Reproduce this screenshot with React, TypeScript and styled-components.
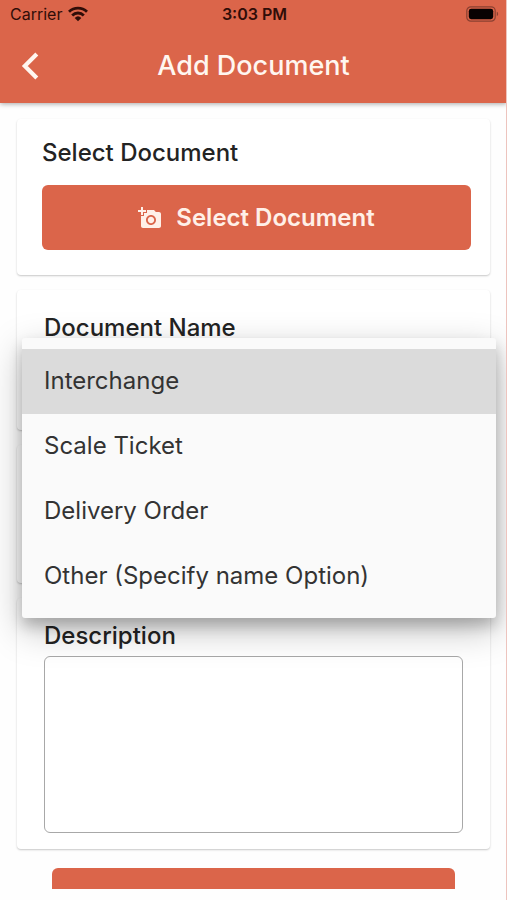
import React, { useState } from "react";
import styled, { createGlobalStyle } from "styled-components";
import { MdAddAPhoto } from "react-icons/md";

const accent = "#db654a";

const GlobalStyle = createGlobalStyle`
  *, *::before, *::after { box-sizing: border-box; }
  body {
    margin: 0;
    background: #fefefe;
    color: #232323;
    font-family: Inter, "Liberation Sans", sans-serif;
  }
  button, textarea { font: inherit; }
`;

const Screen = styled.div`
  display: flex;
  flex-direction: column;
  height: 100vh;
  padding-bottom: 11px;
  border-right: 1px solid #edc4be;
  overflow: hidden;
`;

const Header = styled.header`
  position: relative;
  z-index: 1;
  flex: none;
  margin-right: -1px;
  background: ${accent};
  box-shadow: 0 1px 5px rgba(0, 0, 0, 0.35);
`;

const StatusBar = styled.div`
  display: grid;
  grid-template-columns: 1fr auto 1fr;
  align-items: center;
  height: 28px;
  padding: 0 8px 0 10px;
  color: #300d08;
  font-size: 16px;
  line-height: 20px;
`;

const Carrier = styled.span`
  display: flex;
  align-items: center;
  gap: 6px;
`;

const Clock = styled.time`
  font-weight: 600;
`;

const BatteryIcon = styled.svg`
  justify-self: end;
`;

const NavBar = styled.div`
  display: grid;
  grid-template-columns: 56px 1fr 56px;
  align-items: center;
  height: 75px;
`;

const BackButton = styled.button`
  display: flex;
  align-items: center;
  height: 48px;
  padding: 0 0 0 20px;
  border: 0;
  background: none;
  color: #fff6f0;
  cursor: pointer;
`;

const Title = styled.h1`
  margin: 0;
  color: #fff6f0;
  font-size: 27px;
  font-weight: 500;
  line-height: 32px;
  text-align: center;
`;

const Content = styled.main`
  display: flex;
  flex: 1;
  flex-direction: column;
  gap: 15px;
  min-height: 0;
  padding: 16px 16px 0 17px;
  overflow: hidden;
`;

const Card = styled.section<{ $minHeight?: number }>`
  position: relative;
  flex: none;
  min-height: ${({ $minHeight }) => ($minHeight ? `${$minHeight}px` : "auto")};
  padding: 22px 27px 16px;
  border-radius: 4px;
  background: #fff;
  box-shadow: 0 1px 2px rgba(0, 0, 0, 0.22);
`;

const PickCard = styled(Card)`
  padding: 18px 19px 25px 25px;
`;

const Label = styled.label`
  display: block;
  font-size: 24px;
  font-weight: 500;
  line-height: 32px;
`;

const Heading = styled(Label).attrs({ as: "h2" })`
  margin: 0;
`;

const PrimaryButton = styled.button`
  display: flex;
  align-items: center;
  justify-content: center;
  gap: 14px;
  width: 100%;
  height: 65px;
  border: 0;
  border-radius: 6px;
  background: ${accent};
  color: #fff0e8;
  font-size: 24px;
  font-weight: 600;
  cursor: pointer;
`;

const PickButton = styled(PrimaryButton)`
  margin-top: 16px;
`;

const Menu = styled.ul`
  position: absolute;
  z-index: 2;
  top: 48px;
  right: -6px;
  left: 5px;
  margin: 0;
  padding: 11px 0 9px;
  border-radius: 3px;
  background: #fafafa;
  box-shadow: 0 12px 36px rgba(0, 0, 0, 0.26), 0 8px 14px rgba(0, 0, 0, 0.2);
  list-style: none;
`;

const Option = styled.button<{ $selected: boolean }>`
  display: block;
  width: 100%;
  height: 65px;
  padding: 0 22px 2px;
  border: 0;
  background: ${({ $selected }) => ($selected ? "#dbdbdb" : "transparent")};
  color: #333;
  font-size: 24px;
  line-height: 32px;
  text-align: left;
  cursor: pointer;
`;

const TextArea = styled.textarea`
  display: block;
  width: 100%;
  height: 177px;
  margin-top: 4px;
  padding: 12px;
  border: 1px solid #a8a8a8;
  border-radius: 6px;
  background: transparent;
  resize: none;
`;

const Footer = styled.div`
  flex: none;
  padding: 4px 35px 0;
`;

const WifiIcon = () => (
  <svg width="20" height="16" viewBox="0 0 20 16" aria-hidden="true">
    <g fill="none" stroke="currentColor" strokeWidth="2.8">
      <path d="M1 5.8a13 13 0 0 1 18 0" />
      <path d="M4.2 9.4a8.2 8.2 0 0 1 11.6 0" />
    </g>
    <path d="M6.7 11.9a4.8 4.8 0 0 1 6.6 0L10 15.3z" fill="currentColor" />
  </svg>
);

const Battery = () => (
  <BatteryIcon width="33" height="16" viewBox="0 0 33 16" role="img" aria-label="Battery full">
    <rect x="0.8" y="0.8" width="28.4" height="14.4" rx="4" fill="none" stroke="#8b4031" strokeWidth="1.2" />
    <rect x="2.8" y="2.8" width="24.4" height="10.4" rx="2.4" fill="#080202" />
    <path d="M30.8 5.8v4.4c1.8-.6 1.8-3.8 0-4.4z" fill="#8b4031" />
  </BatteryIcon>
);

const BackIcon = () => (
  <svg width="20" height="28" viewBox="0 0 20 28" aria-hidden="true">
    <path d="M16.8 2L4.8 14l12 12" fill="none" stroke="currentColor" strokeWidth="4.2" />
  </svg>
);

const documentNames = [
  "Interchange",
  "Scale Ticket",
  "Delivery Order",
  "Other (Specify name Option)",
];

export default function App() {
  const [selected, setSelected] = useState(documentNames[0]);
  const [description, setDescription] = useState("");

  return (
    <>
      <GlobalStyle />
      <Screen>
        <Header>
          <StatusBar>
            <Carrier>
              Carrier
              <WifiIcon />
            </Carrier>
            <Clock>3:03 PM</Clock>
            <Battery />
          </StatusBar>
          <NavBar>
            <BackButton type="button" aria-label="Back">
              <BackIcon />
            </BackButton>
            <Title>Add Document</Title>
          </NavBar>
        </Header>
        <Content>
          <PickCard>
            <Heading>Select Document</Heading>
            <PickButton type="button">
              <MdAddAPhoto size={24} aria-hidden="true" />
              Select Document
            </PickButton>
          </PickCard>
          <Card $minHeight={140}>
            <Heading id="document-name">Document Name</Heading>
            <Menu role="listbox" aria-labelledby="document-name">
              {documentNames.map((name) => (
                <li key={name} role="presentation">
                  <Option
                    type="button"
                    role="option"
                    aria-selected={name === selected}
                    $selected={name === selected}
                    onClick={() => setSelected(name)}
                  >
                    {name}
                  </Option>
                </li>
              ))}
            </Menu>
          </Card>
          <Card $minHeight={138} />
          <Card>
            <Label htmlFor="description">Description</Label>
            <TextArea
              id="description"
              value={description}
              onChange={(event) => setDescription(event.target.value)}
            />
          </Card>
          <Footer>
            <PrimaryButton type="submit" aria-label="Submit" />
          </Footer>
        </Content>
      </Screen>
    </>
  );
}
